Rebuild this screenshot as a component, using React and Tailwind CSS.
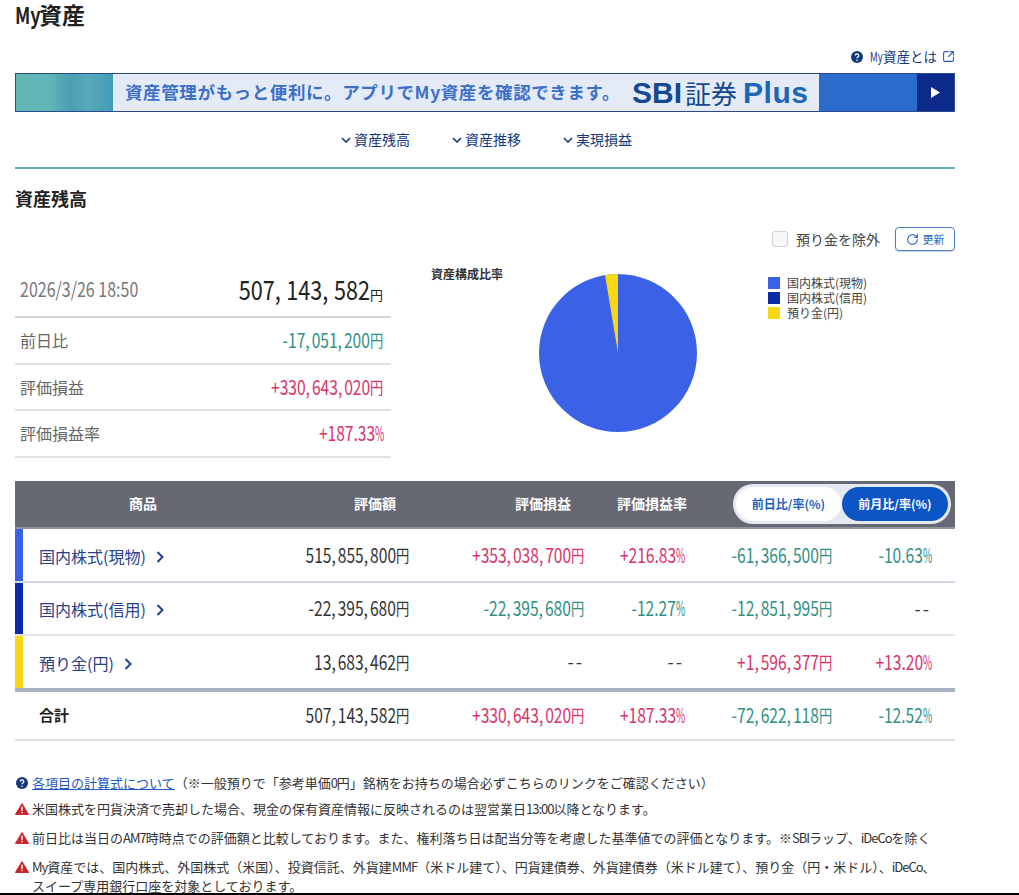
import React from "react";
import { RotateCw, SquareArrowOutUpRight } from "lucide-react";

const FONT = "font-['Noto_Sans_CJK_JP',sans-serif]";
const RED = "text-[#d9336b]";
const GREEN = "text-[#2f8f83]";
const GRAY = "text-[#333]";

const rows = [
  {
    name: "国内株式(現物)",
    bar: "bg-[#3b62e6]",
    h: "h-[54px]",
    line: "border-b-2 border-[#d3d9e4]",
    cells: [
      ["515,855,800円", GRAY],
      ["+353,038,700円", RED],
      ["+216.83%", RED],
      ["-61,366,500円", GREEN],
      ["-10.63%", GREEN],
    ],
  },
  {
    name: "国内株式(信用)",
    bar: "bg-[#0a2aa8]",
    h: "h-[53px]",
    line: "border-b-2 border-[#e4e4e6]",
    cells: [
      ["-22,395,680円", GRAY],
      ["-22,395,680円", GREEN],
      ["-12.27%", GREEN],
      ["-12,851,995円", GREEN],
      ["--", GRAY],
    ],
  },
  {
    name: "預り金(円)",
    bar: "bg-[#f7d716]",
    h: "h-[52px]",
    line: "",
    cells: [
      ["13,683,462円", GRAY],
      ["--", GRAY],
      ["--", GRAY],
      ["+1,596,377円", RED],
      ["+13.20%", RED],
    ],
  },
];

const total = [
  ["507,143,582円", GRAY],
  ["+330,643,020円", RED],
  ["+187.33%", RED],
  ["-72,622,118円", GREEN],
  ["-12.52%", GREEN],
];

const summary = [
  ["前日比", "-17,051,200円", GREEN],
  ["評価損益", "+330,643,020円", RED],
  ["評価損益率", "+187.33%", RED],
];

const legend = [
  ["国内株式(現物)", "bg-[#3b62e6]"],
  ["国内株式(信用)", "bg-[#0a2aa8]"],
  ["預り金(円)", "bg-[#f7d716]"],
];

// commas sit apart from the digits on the real page
const Spaced = ({ text, gap }) =>
  text.split(/(,)/).map((part, i) =>
    part === "," ? <span key={i} className={gap}>,</span> : <span key={i}>{part}</span>
  );

// the site's latin font is condensed, nothing installed is, so squeeze the digits
const Num = ({ value, color }) => {
  if (value === "--") {
    return <div className={`text-right text-[18px] tracking-[2px] ${color}`}>--</div>;
  }
  const body = value.replace(/[円%]$/, "");
  const unit = value.slice(body.length);
  return (
    <div className={`flex justify-end whitespace-nowrap text-[20px] leading-[24px] ${color}`}>
      <span className="origin-right scale-x-[0.78]"><Spaced text={body} gap="mr-[2.5px]" /></span>
      {unit === "円" ? (
        <span className="w-[13px] origin-left scale-x-[0.78] text-[17px]">円</span>
      ) : (
        <span className="w-[8px] origin-left scale-x-[0.5]">%</span>
      )}
    </div>
  );
};

const Latin = ({ children }) => <span className="tracking-[-1px]">{children}</span>;

const HelpIcon = ({ size = 12 }) => (
  <svg width={size} height={size} viewBox="0 0 12 12" className="shrink-0">
    <circle cx="6" cy="6" r="6" fill="#14387f" />
    <path d="M4.3 4.6a1.7 1.7 0 1 1 2.6 1.4c-.6.4-.9.6-.9 1.2" fill="none" stroke="#fff" strokeWidth="1.3" />
    <circle cx="6" cy="9.2" r=".8" fill="#fff" />
  </svg>
);

const WarnIcon = () => (
  <svg width="14" height="12" viewBox="0 0 14 12" className="shrink-0">
    <path d="M7 .6 13.6 11.6H.4Z" fill="#c8242c" stroke="#c8242c" strokeLinejoin="round" />
    <rect x="6.3" y="3.6" width="1.4" height="4.4" fill="#fff" />
    <rect x="6.3" y="8.8" width="1.4" height="1.4" fill="#fff" />
  </svg>
);

const Anchor = ({ label }) => (
  <span className="flex items-center gap-[3px] text-[14px] text-[#14387f]">
    <svg width="10" height="6" viewBox="0 0 10 6" className="mt-[1px]">
      <path d="M1 1 5 5 9 1" fill="none" stroke="#14387f" strokeWidth="1.6" />
    </svg>
    {label}
  </span>
);

const Row = ({ row }) => (
  <div className={`grid grid-cols-[270px_124px_175px_100px_148px_99px_24px] items-center ${row.h} ${row.line}`}>
    <div className="flex h-full items-center">
      <div className={`h-full w-2 ${row.bar}`} />
      <span className="ml-4 flex items-center gap-[10px] pt-[2px] text-[16px] text-[#27408b]">
        {row.name}
        <svg width="8" height="12" viewBox="0 0 8 12" className="mt-[2px]">
          <path d="M1.5 1 6.5 6 1.5 11" fill="none" stroke="#27408b" strokeWidth="2" />
        </svg>
      </span>
    </div>
    {row.cells.map(([v, c], i) => (
      <Num key={i} value={v} color={c} />
    ))}
  </div>
);

export default function App() {
  return (
    <div className={`relative h-[895px] w-[1019px] overflow-hidden border-b-2 border-black bg-white px-[15px] ${FONT}`}>
      <div className="w-[940px]">
        <h1 className="flex pt-[2px] text-[23px] font-bold leading-[24px] text-[#222]">
          <span className="w-[24px] origin-left scale-x-[0.78]">My</span>資産
        </h1>

        <div className="mt-[22px] flex h-[17px] items-center justify-end text-[13.5px] text-[#14387f]">
          <HelpIcon />
          <span className="ml-[7px] w-[13px] origin-left scale-x-[0.7]">My</span>
          <span>資産とは</span>
          <SquareArrowOutUpRight size={13} className="ml-[5px] text-[#2a5ab8]" />
        </div>

        <div className="mt-[8px] flex h-[39px] border border-[#2c4a8f]">
          <div className="w-[97px] bg-[linear-gradient(90deg,#5fb8b4_0%,#62b4b8_35%,#4b9fb0_55%,#59a9b8_75%,#3f9db8_100%)]" />
          <div className="flex w-[706px] items-center bg-[#e4ebf7] pl-[12px]">
            <span className="text-[17.5px] font-bold tracking-[0.6px] text-[#3c6fca]">資産管理がもっと便利に。アプリでMy資産を確認できます。</span>
            <span className="ml-[12px] flex items-center font-['Liberation_Sans','Noto_Sans_CJK_JP',sans-serif] text-[30px] font-bold leading-none text-[#14488f]">
              SBI
              <span className="ml-[3px] font-['Noto_Sans_CJK_JP',sans-serif] text-[26px] font-normal">証券</span>
              <span className="ml-[6px] tracking-[0.5px] text-[#1c67b8]">Plus</span>
            </span>
          </div>
          <div className="w-[98px] bg-[#2a6bcb]" />
          <div className="flex flex-1 items-center justify-center bg-[#0c2a8a]">
            <svg width="9" height="11" viewBox="0 0 9 11"><path d="M0 0 9 5.5 0 11Z" fill="#fff" /></svg>
          </div>
        </div>

        <div className="flex h-[55px] items-center justify-center gap-[42px] pl-[3px]">
          <Anchor label="資産残高" />
          <Anchor label="資産推移" />
          <Anchor label="実現損益" />
        </div>
        <div className="h-[2px] bg-[#66abb8]" />

        <h2 className="mt-[17px] text-[18px] font-bold leading-[24px] text-[#222]">資産残高</h2>

        <div className="mt-[16px] flex h-[26px] items-center justify-end">
          <span className="h-4 w-4 rounded-[3px] border border-[#cfd3da] bg-[#f6f7f9]" />
          <span className="ml-[8px] text-[14px] text-[#444]">預り金を除外</span>
          <button className="ml-[15px] flex h-[24px] w-[60px] items-center justify-center gap-1 rounded-[4px] border border-[#4a7fc4] text-[11px] text-[#2a6bc0] shadow-[0_1px_1px_rgba(40,80,150,0.25)]">
            <RotateCw size={13} />
            更新
          </button>
        </div>

        <div className="mt-[10px] flex items-start">
          <div className="w-[376px]">
            <div className="flex h-[56px] items-center justify-between border-b-2 border-[#d4d6db] pl-[5px] pr-2">
              <span className="origin-left scale-x-[0.8] whitespace-nowrap text-[20px] text-[#777]">2026/3/26 18:50</span>
              <span className="flex items-baseline whitespace-nowrap text-[27px] text-[#222]">
                <span className="origin-right scale-x-[0.8]"><Spaced text="507,143,582" gap="mr-[7px]" /></span>
                <span className="text-[13px]">円</span>
              </span>
            </div>
            {summary.map(([label, value, c]) => (
              <div key={label} className="flex h-[46.5px] items-center justify-between border-b-2 border-[#e0e1e4] pl-[5px] pr-2">
                <span className="text-[16px] text-[#666]">{label}</span>
                <Num value={value} color={c} />
              </div>
            ))}
          </div>

          <span className="ml-[40px] mt-[3px] text-[12px] font-bold text-[#333]">資産構成比率</span>

          <svg width="158" height="158" viewBox="0 0 158 158" className="ml-[36px] mt-[12px] shrink-0">
            <circle cx="79" cy="79" r="79" fill="#3b62e6" />
            <path d="M79 79 66 1.1A79 79 0 0 1 79 0Z" fill="#f7d716" />
          </svg>

          <div className="ml-[71px] mt-[13px] flex flex-col">
            {legend.map(([label, c]) => (
              <div key={label} className="flex h-[15px] items-center gap-[7px] whitespace-nowrap text-[12px] text-[#444]">
                <span className={`h-3 w-3 ${c}`} />
                {label}
              </div>
            ))}
          </div>
        </div>

        <div className="mt-[23px]">
          <div className="grid h-[48px] grid-cols-[256px_208px_128px_90px_258px] items-center border-b-2 border-[#8e93a0] bg-[#666973] text-center text-[14px] font-bold text-white">
            <span>商品</span>
            <span>評価額</span>
            <span>評価損益</span>
            <span>評価損益率</span>
            <div className="flex justify-end pr-1">
              <div className="flex h-[40px] w-[218px] items-center rounded-full bg-[#e6e9f2] p-[3px]">
                <span className="flex h-full w-[105px] items-center justify-center rounded-full bg-white text-[12px] text-[#1c5fc0]">前日比/率(%)</span>
                <span className="ml-[1px] flex h-full flex-1 items-center justify-center rounded-full bg-[#0b55c4] text-[12px] text-white">前月比/率(%)</span>
              </div>
            </div>
          </div>
          {rows.map((row) => <Row key={row.name} row={row} />)}
          <div className="h-1 bg-[#a9b1c4]" />
          <div className="grid h-[49px] grid-cols-[270px_124px_175px_100px_148px_99px_24px] items-center border-b-2 border-[#e0e1e4]">
            <span className="pl-6 text-[15px] font-bold text-[#222]">合計</span>
            {total.map(([v, c], i) => (
              <Num key={i} value={v} color={c} />
            ))}
          </div>
        </div>

        <div className="mt-[32px] flex flex-col text-[13px] leading-[20px] text-[#333]">
          <div className="flex h-[20px] items-center gap-[4px] pl-[1px]">
            <HelpIcon />
            <span><span className="text-[#2457c5] underline">各項目の計算式について</span>（※一般預りで「参考単価<Latin>0</Latin>円」銘柄をお持ちの場合必ずこちらのリンクをご確認ください）</span>
          </div>
          <div className="mt-[6px] flex h-[20px] items-center gap-[3px]">
            <WarnIcon />
            <span>米国株式を円貨決済で売却した場合、現金の保有資産情報に反映されるのは翌営業日<Latin>13:00</Latin>以降となります。</span>
          </div>
          <div className="mt-[9px] flex h-[20px] items-center gap-[3px]">
            <WarnIcon />
            <span>前日比は当日の<Latin>AM7</Latin>時時点での評価額と比較しております。また、権利落ち日は配当分等を考慮した基準値での評価となります。※<Latin>SBI</Latin>ラップ、<Latin>iDeCo</Latin>を除く</span>
          </div>
          <div className="mt-[9px] flex items-start gap-[3px]">
            <div className="mt-[4px]"><WarnIcon /></div>
            <span className="whitespace-nowrap leading-[19px]"><Latin>My</Latin>資産では、国内株式、外国株式（米国）、投資信託、外貨建<Latin>MMF</Latin>（米ドル建て）、円貨建債券、外貨建債券（米ドル建て）、預り金（円・米ドル）、<Latin>iDeCo</Latin>、<br />スイープ専用銀行口座を対象としております。</span>
          </div>
        </div>
      </div>
    </div>
  );
}
